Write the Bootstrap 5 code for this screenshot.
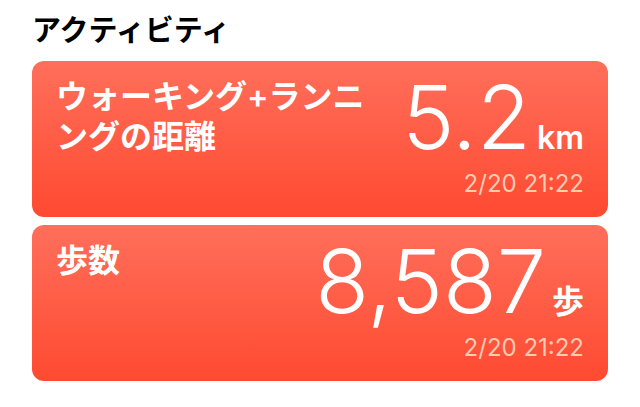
<!DOCTYPE html>
<html lang="ja">
<head>
<meta charset="utf-8">
<meta name="viewport" content="width=device-width, initial-scale=1">
<title>アクティビティ</title>
<link href="https://cdn.jsdelivr.net/npm/bootstrap@5.3.0/dist/css/bootstrap.min.css" rel="stylesheet">
<style>
body { font-family: Inter, "Noto Sans CJK JP", sans-serif; background: #fff; }
.page { padding: 13px 32px 24px; }
.section-title { font-size: 29px; line-height: 36px; font-weight: 600; color: #000; margin-bottom: 12px; }
.metric { background: linear-gradient(#ff6f5b, #ff4a31); border-radius: 12px; min-height: 156px; padding: 16px 24px 12px; color: #fff; }
.metric-name { font-size: 32px; line-height: 40px; font-weight: 600; max-width: 320px; }
.metric-value { font-size: 88px; line-height: 80px; font-weight: 300; }
.metric-unit { font-size: 32px; line-height: 40px; font-weight: 600; margin-left: 6px; }
.metric-time { font-size: 24px; line-height: 36px; margin-top: 8px; color: #ffcbb1; }
</style>
</head>
<body>
<main class="page">
<h1 class="section-title">アクティビティ</h1>
<div class="d-flex flex-column gap-2">
<section class="metric d-flex justify-content-between">
<h2 class="metric-name mb-0">ウォーキング+ランニングの距離</h2>
<div class="text-end text-nowrap">
<div class="d-flex align-items-baseline justify-content-end"><span class="metric-value">5.2</span><span class="metric-unit">km</span></div>
<div class="metric-time">2/20 21:22</div>
</div>
</section>
<section class="metric d-flex justify-content-between">
<h2 class="metric-name mb-0">歩数</h2>
<div class="text-end text-nowrap">
<div class="d-flex align-items-baseline justify-content-end"><span class="metric-value">8,587</span><span class="metric-unit">歩</span></div>
<div class="metric-time">2/20 21:22</div>
</div>
</section>
</div>
</main>
<script src="https://cdn.jsdelivr.net/npm/bootstrap@5.3.0/dist/js/bootstrap.bundle.min.js"></script>
</body>
</html>
